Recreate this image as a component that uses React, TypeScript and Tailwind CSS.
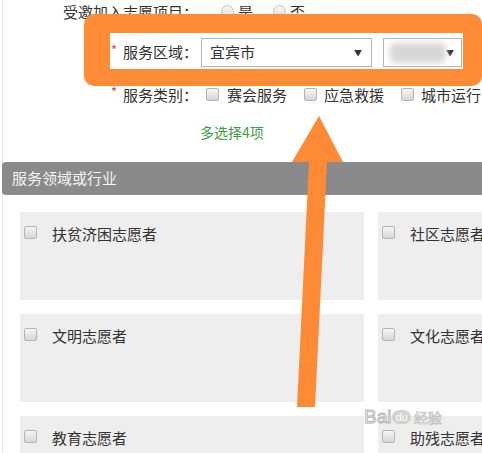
const Box = () => (
  <span className="inline-block w-[13px] h-[13px] shrink-0 rounded-[2px] border border-[#b4b4b4] bg-gradient-to-b from-[#f6f6f6] to-[#d6d6d6]" />
);

const Radio = () => (
  <span className="inline-block w-[13px] h-[13px] shrink-0 rounded-full border border-[#c4c4c4] bg-gradient-to-b from-[#f8f8f8] to-[#dcdcdc]" />
);

const Star = () => <span className="text-[#e04848] text-[13px] mr-[6px] -mt-[6px]">*</span>;

const fields = ["扶贫济困志愿者", "社区志愿者", "文明志愿者", "文化志愿者", "教育志愿者", "助残志愿者"];

export default function App() {
  return (
    <div className="relative w-[482px] h-[453px] overflow-hidden bg-white font-['Noto_Sans_CJK_SC',sans-serif] text-[#333]">
      <div className="ml-[2px] border-l border-[#e2e2e2] h-full pt-[1px]">
        {/* 受邀 */}
        <div className="flex items-center h-[23px] text-[15px]">
          <div className="w-[195px] text-right">受邀加入志愿项目：</div>
          <span className="ml-[23px]"><Radio /></span>
          <span className="ml-[4px]">是</span>
          <span className="ml-[20px]"><Radio /></span>
          <span className="ml-[4px]">否</span>
        </div>

        {/* 服务区域 */}
        <div className="flex items-center h-[29px] mt-[14px] text-[15px]">
          <div className="w-[195px] flex items-center justify-end">
            <Star />
            <span>服务区域：</span>
          </div>
          <div className="ml-[3px] w-[171px] h-[29px] border border-[#b5b5b5] flex items-center justify-between pl-[8px] pr-[9px]">
            <span>宜宾市</span>
            <span className="text-[8px]">▼</span>
          </div>
          <div className="ml-[11px] w-[79px] h-[29px] border border-[#b5b5b5] flex items-center justify-between pl-[6px] pr-[7px]">
            <span className="w-[56px] h-[20px] rounded-[6px] bg-[#d6d6d6] blur-[3px]" />
            <span className="text-[8px]">▼</span>
          </div>
        </div>

        {/* 服务类别 */}
        <div className="flex items-center h-[24px] mt-[16px] text-[15px] whitespace-nowrap">
          <div className="w-[195px] flex items-center justify-end">
            <Star />
            <span>服务类别：</span>
          </div>
          <span className="ml-[8px]"><Box /></span>
          <span className="ml-[8px]">赛会服务</span>
          <span className="ml-[17px]"><Box /></span>
          <span className="ml-[7px]">应急救援</span>
          <span className="ml-[17px]"><Box /></span>
          <span className="ml-[7px]">城市运行</span>
        </div>

        {/* 提示 */}
        <div className="h-[24px] mt-[13px] pl-[197px] flex items-center text-[14px] text-[#3f9c3f]">多选择4项</div>

        {/* 标题栏 */}
        <div className="mt-[18px] h-[33px] -ml-[1px] rounded-l-[4px] bg-[#8a8a8a] flex items-center pl-[10px] text-[15px] text-[#f4f4f4]">
          服务领域或行业
        </div>

        {/* 卡片 */}
        <div className="pt-[17px] pl-[17px] grid grid-cols-[344px_344px] gap-x-[14px] gap-y-[14px]">
          {fields.map((f) => (
            <div key={f} className="h-[88px] bg-[#eeeeee] flex items-start pt-[14px] pl-[4px] text-[15px] whitespace-nowrap">
              <Box />
              <span className="ml-[15px] leading-[16px]">{f}</span>
            </div>
          ))}
        </div>
      </div>

      {/* 橙色标注框 */}
      <div className="absolute left-[84px] top-[14px] w-[398px] h-[72px] rounded-[10px] border-[#fe8b36] border-l-[26px] border-t-[19px] border-b-[17px] border-r-[19px]" />

      {/* 箭头 */}
      <svg className="absolute left-0 top-0" width="482" height="453" viewBox="0 0 482 453">
        <polygon
          points="319,116 343,162 327,162 315,407 297,407 309,162 292,162"
          fill="#fe8a35"
        />
      </svg>

      {/* 水印 */}
      <div className="absolute left-[364px] top-[403px] flex items-center text-[19px] font-['Liberation_Sans',sans-serif] text-white/70 [-webkit-text-stroke:1px_#b8b8b8]">
        <span>Bai</span>
        <span className="ml-[1px] rounded-full bg-[#c8c8c8]/80 text-white text-[11px] px-[3px] leading-[14px] [-webkit-text-stroke:0]">du</span>
        <span className="ml-[3px] text-[14px] font-['Noto_Sans_CJK_SC',sans-serif] [-webkit-text-stroke:0.6px_#b8b8b8]">经验</span>
      </div>
    </div>
  );
}
